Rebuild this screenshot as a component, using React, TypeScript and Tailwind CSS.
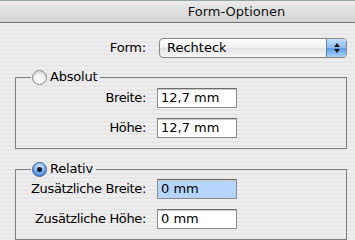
import React from "react";

const font = { fontFamily: '"DejaVu Sans", "Liberation Sans", sans-serif' };

function Radio({ checked }: { checked?: boolean }) {
  return checked ? (
    <span className="flex h-[15px] w-[15px] items-center justify-center rounded-full border border-[#3a5f8f] bg-[radial-gradient(circle_at_50%_30%,#d9ecff_0%,#6fa6e6_55%,#2f6fc4_100%)]">
      <span className="h-[5px] w-[5px] rounded-full bg-[#0d1b2a]" />
    </span>
  ) : (
    <span className="block h-[15px] w-[15px] rounded-full border border-[#8a8a8a] bg-[radial-gradient(circle_at_50%_70%,#ffffff_0%,#f2f2f2_45%,#c9c9c9_100%)]" />
  );
}

function Field({ value, focused }: { value: string; focused?: boolean }) {
  return (
    <div
      className={`h-[20px] w-[80px] border border-[#8c8c8c] border-t-[#6c6c6c] pl-[3px] text-[13px] leading-[18px] text-black shadow-[inset_0_1px_0_#c8c8c8] ${
        focused ? "bg-[#b6d5fd]" : "bg-white"
      }`}
    >
      {value}
    </div>
  );
}

function Row({ label, value, focused }: { label: string; value: string; focused?: boolean }) {
  return (
    <div className="flex items-center">
      <div className="w-[130px] text-right text-[13px] tracking-[-0.35px] text-black">{label}</div>
      <div className="ml-[11px]">
        <Field value={value} focused={focused} />
      </div>
    </div>
  );
}

function Group({ label, checked, children }: { label: string; checked?: boolean; children: React.ReactNode }) {
  return (
    <fieldset className="ml-[15px] mr-[8px] border border-[#7d7d7d]">
      <legend className="ml-[15px] flex h-[16px] items-center px-[1px]">
        <Radio checked={checked} />
        <span className="ml-[3px] mr-[2px] text-[13px] leading-[16px] tracking-[-0.2px] text-black">{label}</span>
      </legend>
      {children}
    </fieldset>
  );
}

export default function App() {
  return (
    <div className="h-[240px] w-[355px] overflow-hidden bg-[#ececec]" style={font}>
      {/* title bar */}
      <div className="flex h-[23px] items-center justify-center border-t border-b border-t-[#97a5a5] border-b-[#6f6f6f] bg-[linear-gradient(#ebebeb,#d2d2d2)] pl-[118px] text-[13px] text-[#111]">
        Form-Optionen
      </div>

      <div className="h-[217px] bg-[repeating-linear-gradient(#eeeeee_0px,#eeeeee_2px,#e6e6e6_2px,#e6e6e6_4px)] pt-[15px]">
        {/* Form popup */}
        <div className="flex items-center">
          <div className="w-[146px] text-right text-[13px] tracking-[-0.2px] text-black">Form:</div>
          <div className="ml-[13px] flex h-[20px] w-[188px] overflow-hidden rounded-[4px] border border-[#8a8a8a] bg-[linear-gradient(#ffffff,#f0f0f0_50%,#e2e2e2_51%,#f7f7f7)]">
            <div className="flex-1 pl-[7px] text-[13px] leading-[18px] text-black">Rechteck</div>
            <div className="flex w-[20px] flex-col items-center justify-center gap-[2px] border-l border-[#5a7fb0] bg-[linear-gradient(#c5ddf7,#8cbbef_50%,#5e9be6_51%,#a9d1fb)]">
              <span className="h-0 w-0 border-x-[3px] border-b-[4px] border-x-transparent border-b-[#1a1a1a]" />
              <span className="h-0 w-0 border-x-[3px] border-t-[4px] border-x-transparent border-t-[#1a1a1a]" />
            </div>
          </div>
        </div>

        <div className="mt-[11px]">
          <Group label="Absolut">
            <div className="flex flex-col gap-[10px] pb-[10px] pt-[3px]">
              <Row label="Breite:" value="12,7 mm" />
              <Row label="Höhe:" value="12,7 mm" />
            </div>
          </Group>
        </div>

        <div className="mt-[12px]">
          <Group label="Relativ" checked>
            <div className="flex flex-col gap-[10px] pb-[10px] pt-[2px]">
              <Row label="Zusätzliche Breite:" value="0 mm" focused />
              <Row label="Zusätzliche Höhe:" value="0 mm" />
            </div>
          </Group>
        </div>
      </div>
    </div>
  );
}
